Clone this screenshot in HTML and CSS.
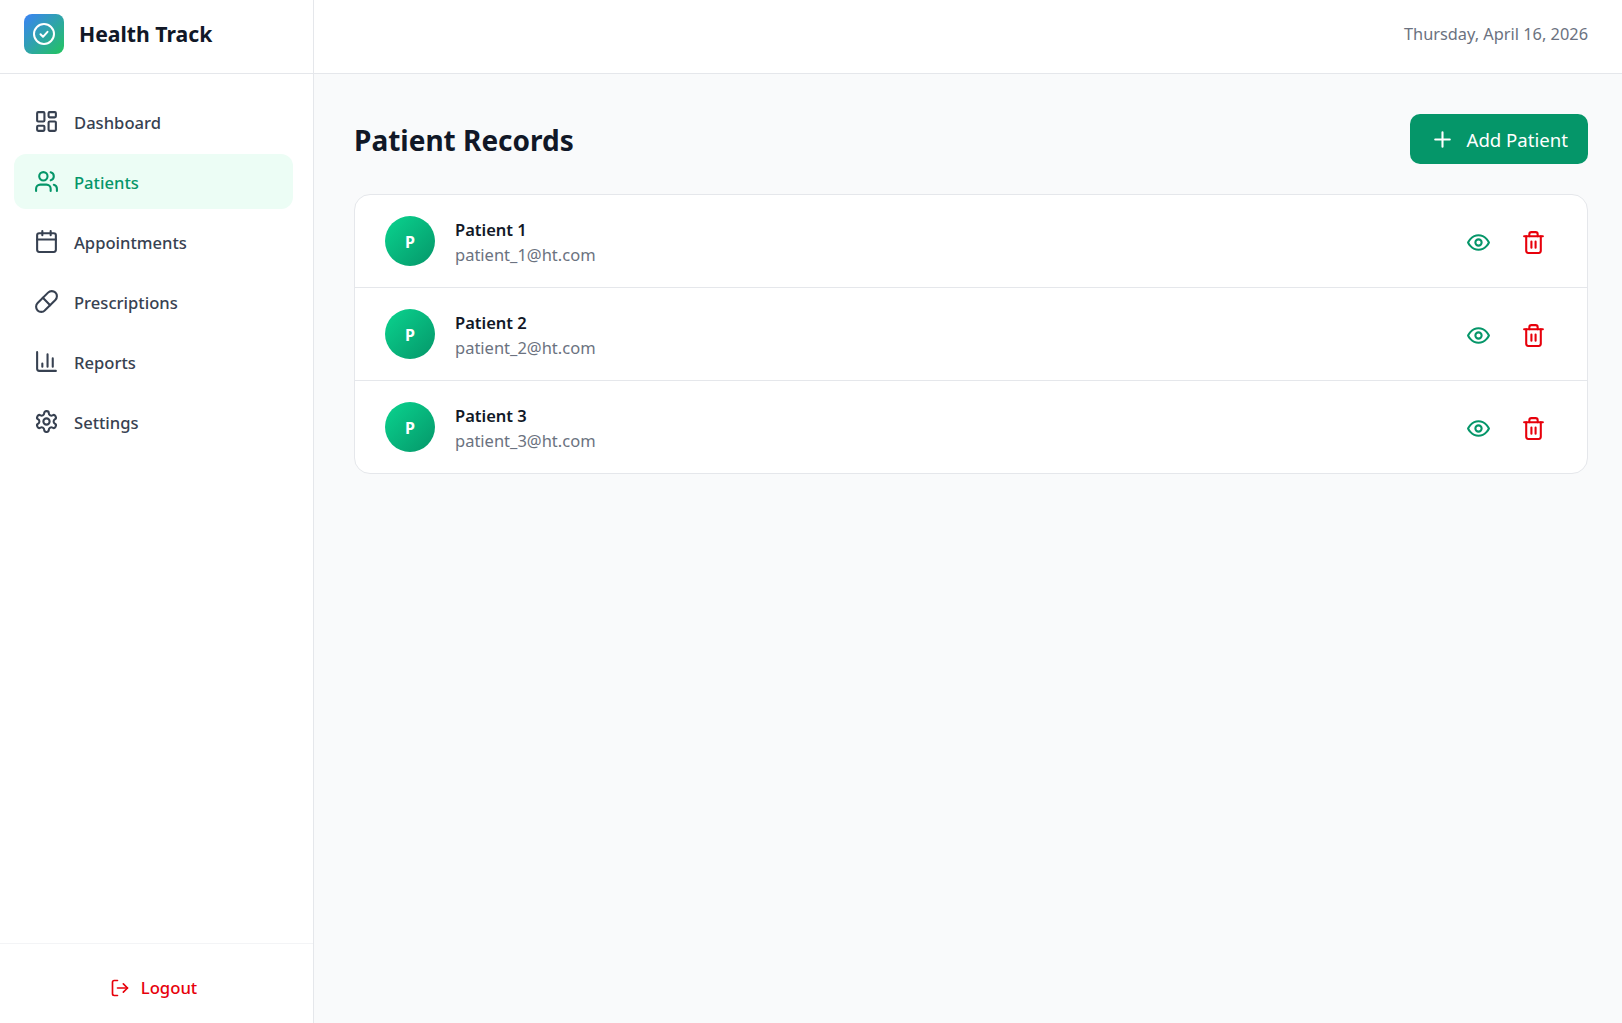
FILE: index.html
```html
<!DOCTYPE html>
<html lang="en">
<head>
<meta charset="utf-8">
<title>Health Track</title>
<link rel="stylesheet" href="styles.css">
</head>
<body>
<div class="app">
  <aside class="sidebar">
    <div class="brand">
      <div class="logo">
        <svg viewBox="0 0 24 24" width="24" height="24" fill="none" stroke="#fff" stroke-width="2" stroke-linecap="round" stroke-linejoin="round"><circle cx="12" cy="12" r="10"/><path d="M8.500 12.300l2.500 2.500 4.500-5"/></svg>
      </div>
      <span class="brand-name">Health Track</span>
    </div>
    <nav class="nav">
      <a class="nav-item">
        <svg class="nav-icon" viewBox="0 0 24 24"><rect x="3" y="3" width="7" height="9" rx="1"/><rect x="14" y="3" width="7" height="5" rx="1"/><rect x="14" y="12" width="7" height="9" rx="1"/><rect x="3" y="16" width="7" height="5" rx="1"/></svg>
        <span>Dashboard</span>
      </a>
      <a class="nav-item active">
        <svg class="nav-icon" viewBox="0 0 24 24"><path d="M16 21v-2a4 4 0 0 0-4-4H6a4 4 0 0 0-4 4v2"/><circle cx="9" cy="7" r="4"/><path d="M22 21v-2a4 4 0 0 0-3-3.870"/><path d="M16 3.130a4 4 0 0 1 0 7.750"/></svg>
        <span>Patients</span>
      </a>
      <a class="nav-item">
        <svg class="nav-icon" viewBox="0 0 24 24"><path d="M8 2v4M16 2v4"/><rect x="3" y="4" width="18" height="18" rx="2"/><path d="M3 10h18"/></svg>
        <span>Appointments</span>
      </a>
      <a class="nav-item">
        <svg class="nav-icon" viewBox="0 0 24 24"><path d="M10.500 20.500l10-10a4.950 4.950 0 1 0-7-7l-10 10a4.950 4.950 0 1 0 7 7z"/><path d="M8.500 8.500l7 7"/></svg>
        <span>Prescriptions</span>
      </a>
      <a class="nav-item">
        <svg class="nav-icon" viewBox="0 0 24 24"><path d="M3 3v16a2 2 0 0 0 2 2h16"/><path d="M18 17V9M13 17V5M8 17v-3"/></svg>
        <span>Reports</span>
      </a>
      <a class="nav-item">
        <svg class="nav-icon" viewBox="0 0 24 24"><path d="M12.220 2h-.44a2 2 0 0 0-2 2v.18a2 2 0 0 1-1 1.730l-.43.25a2 2 0 0 1-2 0l-.15-.08a2 2 0 0 0-2.730.73l-.22.38a2 2 0 0 0 .73 2.730l.15.1a2 2 0 0 1 1 1.720v.51a2 2 0 0 1-1 1.740l-.15.09a2 2 0 0 0-.73 2.730l.22.38a2 2 0 0 0 2.730.73l.15-.08a2 2 0 0 1 2 0l.43.25a2 2 0 0 1 1 1.730V20a2 2 0 0 0 2 2h.44a2 2 0 0 0 2-2v-.18a2 2 0 0 1 1-1.730l.43-.25a2 2 0 0 1 2 0l.15.08a2 2 0 0 0 2.730-.73l.22-.39a2 2 0 0 0-.73-2.730l-.15-.08a2 2 0 0 1-1-1.740v-.5a2 2 0 0 1 1-1.740l.15-.09a2 2 0 0 0 .73-2.730l-.22-.38a2 2 0 0 0-2.730-.73l-.15.08a2 2 0 0 1-2 0l-.43-.25a2 2 0 0 1-1-1.730V4a2 2 0 0 0-2-2z"/><circle cx="12" cy="12" r="3"/></svg>
        <span>Settings</span>
      </a>
    </nav>
    <div class="sidebar-foot">
      <a class="logout">
        <svg class="logout-icon" viewBox="0 0 24 24"><path d="M9 21H5a2 2 0 0 1-2-2V5a2 2 0 0 1 2-2h4"/><path d="M16 17l5-5-5-5"/><path d="M21 12H9"/></svg>
        <span>Logout</span>
      </a>
    </div>
  </aside>
  <div class="main">
    <header class="topbar"><span class="date">Thursday, April 16, 2026</span></header>
    <main class="content">
      <div class="page-head">
        <h1 class="title">Patient Records</h1>
        <button class="add-btn">
          <svg class="plus" viewBox="0 0 24 24"><path d="M5 12h14M12 5v14"/></svg>
          <span>Add Patient</span>
        </button>
      </div>
      <div class="card">
        <div class="row">
          <div class="avatar">P</div>
          <div class="info"><div class="name">Patient 1</div><div class="email">patient_1@ht.com</div></div>
          <div class="actions">
            <svg class="act view" viewBox="0 0 24 24"><path d="M2 12s3-7 10-7 10 7 10 7-3 7-10 7-10-7-10-7z"/><circle cx="12" cy="12" r="3"/></svg>
            <svg class="act del" viewBox="0 0 24 24"><path d="M3 6h18"/><path d="M19 6v14a2 2 0 0 1-2 2H7a2 2 0 0 1-2-2V6"/><path d="M8 6V4a2 2 0 0 1 2-2h4a2 2 0 0 1 2 2v2"/><path d="M10 11v6M14 11v6"/></svg>
          </div>
        </div>
        <div class="row">
          <div class="avatar">P</div>
          <div class="info"><div class="name">Patient 2</div><div class="email">patient_2@ht.com</div></div>
          <div class="actions">
            <svg class="act view" viewBox="0 0 24 24"><path d="M2 12s3-7 10-7 10 7 10 7-3 7-10 7-10-7-10-7z"/><circle cx="12" cy="12" r="3"/></svg>
            <svg class="act del" viewBox="0 0 24 24"><path d="M3 6h18"/><path d="M19 6v14a2 2 0 0 1-2 2H7a2 2 0 0 1-2-2V6"/><path d="M8 6V4a2 2 0 0 1 2-2h4a2 2 0 0 1 2 2v2"/><path d="M10 11v6M14 11v6"/></svg>
          </div>
        </div>
        <div class="row">
          <div class="avatar">P</div>
          <div class="info"><div class="name">Patient 3</div><div class="email">patient_3@ht.com</div></div>
          <div class="actions">
            <svg class="act view" viewBox="0 0 24 24"><path d="M2 12s3-7 10-7 10 7 10 7-3 7-10 7-10-7-10-7z"/><circle cx="12" cy="12" r="3"/></svg>
            <svg class="act del" viewBox="0 0 24 24"><path d="M3 6h18"/><path d="M19 6v14a2 2 0 0 1-2 2H7a2 2 0 0 1-2-2V6"/><path d="M8 6V4a2 2 0 0 1 2-2h4a2 2 0 0 1 2 2v2"/><path d="M10 11v6M14 11v6"/></svg>
          </div>
        </div>
      </div>
    </main>
  </div>
</div>
</body>
</html>
```

FILE: styles.css
```css
* { box-sizing: border-box; }
html, body { margin: 0; height: 100%; }
body { font-family: "Noto Sans", "Open Sans", sans-serif; color: #111827; background: #f9fafb; }
.app { display: flex; height: 1023px; overflow: hidden; }

.sidebar { width: 314px; flex: none; display: flex; flex-direction: column; background: #fff; border-right: 1px solid #e5e7eb; }
.brand { height: 74px; flex: none; display: flex; align-items: flex-start; gap: 15px; padding: 14px 24px 0; border-bottom: 1px solid #e5e7eb; }
.logo { width: 40px; height: 40px; flex: none; border-radius: 8px; display: flex; align-items: center; justify-content: center; background: linear-gradient(135deg, #3b82f6, #22c55e); }
.brand-name { font-size: 21.2px; font-weight: 700; color: #111827; line-height: 40px; }

.nav { flex: 1; display: flex; flex-direction: column; gap: 5px; padding: 20px 20px 20px 14px; }
.nav-item { height: 55px; display: flex; align-items: center; gap: 15px; padding: 0 20px; border-radius: 12px; font-size: 16.6px; font-weight: 500; color: #374151; }
.nav-item span { padding-top: 2px; }
.nav-item.active { background: #ecfdf5; color: #059669; }
.nav-icon { width: 25px; height: 25px; flex: none; fill: none; stroke: currentColor; stroke-width: 2; stroke-linecap: round; stroke-linejoin: round; }

.sidebar-foot { height: 80px; flex: none; display: flex; align-items: center; justify-content: center; padding: 8px 20px 0 14px; border-top: 1px solid #f3f4f6; }
.logout { display: flex; align-items: center; gap: 11px; color: #e7000b; font-size: 16.7px; font-weight: 500; }
.logout-icon { width: 20px; height: 20px; fill: none; stroke: currentColor; stroke-width: 2; stroke-linecap: round; stroke-linejoin: round; }

.main { flex: 1; min-width: 0; display: flex; flex-direction: column; }
.topbar { height: 74px; flex: none; display: flex; align-items: flex-start; justify-content: flex-end; padding: 14px 34px 0; background: #fff; border-bottom: 1px solid #e5e7eb; }
.date { font-size: 16.35px; color: #6b7280; line-height: 40px; }

.content { flex: 1; padding: 40px 34px 40px 40px; }
.page-head { display: flex; align-items: center; justify-content: space-between; margin-bottom: 30px; }
.title { margin: 0; padding-top: 2px; font-size: 28px; font-weight: 700; color: #111827; line-height: 48px; }
.add-btn { height: 50px; display: flex; align-items: center; gap: 12px; padding: 0 20px; border: 0; border-radius: 10px; background: #059669; color: #fff; font: 400 18.6px "Noto Sans", "Open Sans", sans-serif; }
.plus { width: 25px; height: 25px; fill: none; stroke: currentColor; stroke-width: 2; stroke-linecap: round; }

.card { background: #fff; border: 1px solid #e5e7eb; border-radius: 16px; overflow: hidden; }
.row { display: flex; align-items: center; gap: 20px; padding: 20px 30px; border-bottom: 1px solid #e5e7eb; }
.row:last-child { border-bottom: 0; }
.avatar { width: 50px; height: 50px; flex: none; border-radius: 50%; padding-top: 2px; display: flex; align-items: center; justify-content: center; background: linear-gradient(135deg, #0ad48f, #059669); color: #fff; font-size: 16px; font-weight: 700; }
.info { flex: 1; min-width: 0; padding-top: 2px; }
.name { font-size: 16.5px; font-weight: 600; color: #111827; line-height: 25px; }
.email { font-size: 16.5px; color: #6b7280; line-height: 25px; }
.actions { display: flex; align-items: center; gap: 30px; padding: 2px 11px 0 0; }
.act { width: 25px; height: 25px; fill: none; stroke-width: 2; stroke-linecap: round; stroke-linejoin: round; }
.view { stroke: #059669; }
.del { stroke: #e7000b; }
```
